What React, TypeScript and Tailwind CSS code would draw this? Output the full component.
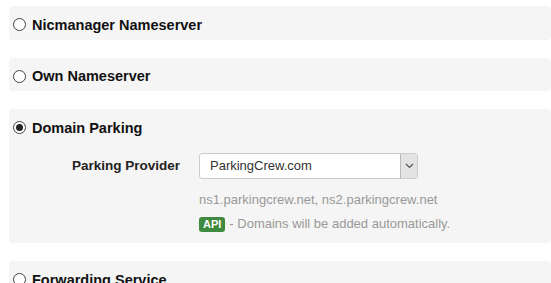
const Radio = ({ checked }: { checked?: boolean }) => (
  <span className="flex h-[13px] w-[13px] shrink-0 items-center justify-center rounded-full border border-[#444] bg-white">
    {checked && <span className="h-[7px] w-[7px] rounded-full bg-[#222]" />}
  </span>
);

const Option = ({ label, checked, children }: { label: string; checked?: boolean; children?: React.ReactNode }) => (
  <div className="rounded-[4px] bg-[#f5f5f5] px-[4px] pt-[10.5px] pb-[7px]">
    <label className="flex items-center gap-[6px] text-[14.5px] leading-[16px] font-bold text-[#111]">
      <Radio checked={checked} />
      {label}
    </label>
    {children}
  </div>
);

export default function App() {
  return (
    <div className="flex w-[551px] flex-col gap-[18px] bg-white pt-[6px] pl-[9px] font-['Liberation_Sans',Arial,sans-serif]">
      <Option label="Nicmanager Nameserver" />
      <Option label="Own Nameserver" />
      <Option label="Domain Parking" checked>
        <div className="mt-[17.5px] flex pb-[4px]">
          <div className="flex h-[26px] w-[167px] items-center justify-end text-[13.5px] font-bold text-[#222]">
            Parking Provider
          </div>
          <div className="ml-[19px] flex flex-col">
            <div className="flex h-[26px] w-[219px] overflow-hidden rounded-[3px] border border-[#ccc] bg-white">
              <span className="flex flex-1 items-center pl-[10px] text-[13px] text-[#333]">ParkingCrew.com</span>
              <span className="flex w-[17px] items-center justify-center border-l border-[#bbb] bg-[#e3e3e3]">
                <svg width="9" height="6" viewBox="0 0 9 6" fill="none">
                  <path d="M1 1l3.5 3.5L8 1" stroke="#555" strokeWidth="1.2" />
                </svg>
              </span>
            </div>
            <div className="mt-[13px] text-[13px] leading-[16px] text-[#999]">ns1.parkingcrew.net, ns2.parkingcrew.net</div>
            <div className="mt-[8px] flex h-[16px] items-center text-[13px] leading-[16px] text-[#999]">
              <span className="mr-[4px] rounded-[3px] bg-[#3e8a3e] px-[4px] pt-[1px] pb-[1px] text-[11px] leading-[13px] font-bold text-white">
                API
              </span>
              - Domains will be added automatically.
            </div>
          </div>
        </div>
      </Option>
      <Option label="Forwarding Service" />
    </div>
  );
}
